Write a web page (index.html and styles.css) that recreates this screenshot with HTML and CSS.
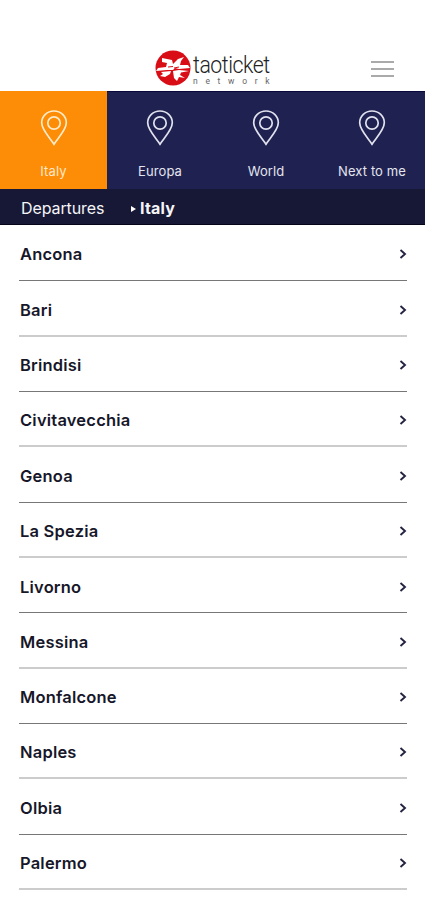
FILE: index.html
```
<!DOCTYPE html>
<html lang="en">
<head>
<meta charset="utf-8">
<title>taoticket network</title>
<link rel="stylesheet" href="styles.css">
</head>
<body>
<svg class="defs" width="0" height="0" aria-hidden="true">
  <symbol id="pin" viewBox="0 0 28 36"><path d="M14 34.2C10.500 28.500 1.700 20 1.700 12.800A12.300 11.800 0 0 1 26.300 12.800C26.300 20 17.500 28.500 14 34.200Z"/><circle cx="14" cy="13" r="6.200"/></symbol>
  <symbol id="chevron" viewBox="0 0 8 10"><path d="M1.500 1L6 5L1.500 9"/></symbol>
</svg>
<header class="header">
  <div class="logo">
    <svg class="emblem" viewBox="0 0 36 36">
      <circle cx="18" cy="18" r="17.500" fill="#d90d15"/>
      <path fill="#fff" d="M7 8L17 10L18 14L23 9L29 7L26 11L25 15H33L35 18L24 19L20 18L18 20L12 20L1 21L3 18L11 17L12 13L7 12Z"/>
      <path fill="#fff" d="M6 22L16 21L15 24L10 27L5 26L8 24Z M18 21L24 20L34 21L26 22.500L25 25L30 28L24 27L22 31L19 28Z"/>
      <path d="M13 17L18 16.500M19 18L24 17" fill="none" stroke="#d90d15" stroke-width="1"/>
    </svg>
    <div class="wordmark"><span class="name">taoticket</span><span class="sub">network</span></div>
  </div>
  <div class="menu"><i></i><i></i><i></i></div>
</header>
<nav class="tabs">
  <div class="tab active"><svg class="pin"><use href="#pin"/></svg><span>Italy</span></div>
  <div class="tab"><svg class="pin"><use href="#pin"/></svg><span>Europa</span></div>
  <div class="tab"><svg class="pin"><use href="#pin"/></svg><span>World</span></div>
  <div class="tab"><svg class="pin"><use href="#pin"/></svg><span>Next to me</span></div>
</nav>
<div class="crumbs"><span class="from">Departures</span><svg class="arrow" viewBox="0 0 5 6"><path d="M0 0L5 3L0 6Z"/></svg><strong>Italy</strong></div>
<main class="ports">
  <div class="port"><span>Ancona</span><svg class="chev"><use href="#chevron"/></svg></div>
  <div class="port"><span>Bari</span><svg class="chev"><use href="#chevron"/></svg></div>
  <div class="port"><span>Brindisi</span><svg class="chev"><use href="#chevron"/></svg></div>
  <div class="port"><span>Civitavecchia</span><svg class="chev"><use href="#chevron"/></svg></div>
  <div class="port"><span>Genoa</span><svg class="chev"><use href="#chevron"/></svg></div>
  <div class="port"><span>La Spezia</span><svg class="chev"><use href="#chevron"/></svg></div>
  <div class="port"><span>Livorno</span><svg class="chev"><use href="#chevron"/></svg></div>
  <div class="port"><span>Messina</span><svg class="chev"><use href="#chevron"/></svg></div>
  <div class="port"><span>Monfalcone</span><svg class="chev"><use href="#chevron"/></svg></div>
  <div class="port"><span>Naples</span><svg class="chev"><use href="#chevron"/></svg></div>
  <div class="port"><span>Olbia</span><svg class="chev"><use href="#chevron"/></svg></div>
  <div class="port"><span>Palermo</span><svg class="chev"><use href="#chevron"/></svg></div>
</main>
</body>
</html>
```
FILE: styles.css
```
* { box-sizing: border-box; }
body { margin: 0; height: 900px; overflow: hidden; background: #fff; font-family: Inter, sans-serif; color: #17172a; }
.defs { display: block; height: 0; }
.header { height: 91px; padding: 50px 31px 0 155px; display: flex; justify-content: space-between; }
.logo { display: flex; }
.emblem { width: 36px; height: 36px; }
.wordmark { display: flex; flex-direction: column; padding: 5px 0 0 2px; font-family: Roboto, sans-serif; }
.name { font-size: 23px; line-height: 22px; font-weight: 300; color: #222; letter-spacing: -0.500px; white-space: nowrap; width: 83px; transform: scaleX(0.925); transform-origin: left; }
.sub { font-size: 8.500px; line-height: 8px; letter-spacing: 7.700px; color: #666; white-space: nowrap; width: 78px; }
.menu { width: 23px; display: flex; flex-direction: column; gap: 5px; padding-top: 11px; }
.menu i { height: 2px; background: #aaa; }
.tabs { height: 98px; display: grid; grid-template-columns: 107px 106px 106px 106px; background: #1f2251; border-top: 1px solid #08083d; }
.tab { display: flex; flex-direction: column; align-items: center; padding-top: 18px; color: #e4e4ee; font-size: 13px; line-height: 18px; letter-spacing: 0.100px; }
.active { background: #fd8c07; color: #ffe8c8; margin-top: -1px; padding-top: 19px; }
.pin { width: 28px; height: 36px; fill: none; stroke: #e2e2ee; stroke-width: 1.700; margin-bottom: 16px; }
.active .pin { stroke: #ffebc8; }
.crumbs { height: 36px; display: flex; align-items: center; padding-left: 21px; padding-top: 2px; background: #171835; color: #f5f5f8; font-size: 16px; border-bottom: 1px solid #050519; }
.from { width: 110px; letter-spacing: -0.100px; }
.arrow { width: 5px; height: 6px; fill: #fff; margin-right: 4px; margin-top: 2px; }
.crumbs strong { letter-spacing: 0.200px; }
.ports { padding: 0 18px 0 19px; }
.port { height: 55.350px; display: flex; align-items: center; justify-content: space-between; padding: 3px 0 0 1px; border-bottom: 1px solid #777; font-size: 16.500px; letter-spacing: 0.200px; font-weight: 600; }
.port:first-child { height: 56.400px; }
.port:nth-child(even) { border-bottom: 2px solid #ccc; }
.chev { width: 8px; height: 10px; fill: none; stroke: #242440; stroke-width: 1.900; }
```
